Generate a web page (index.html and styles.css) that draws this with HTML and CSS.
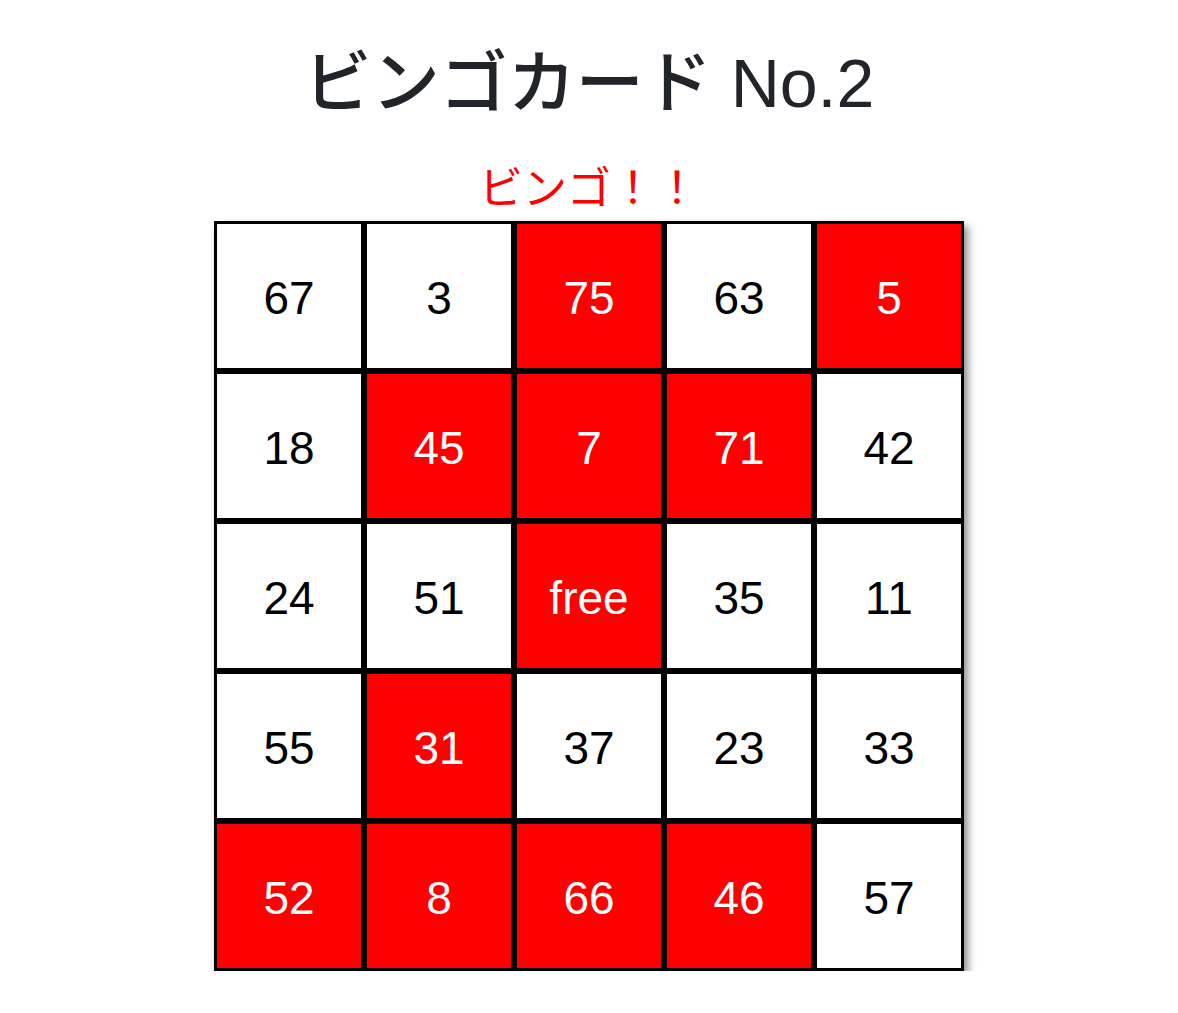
FILE: index.html
```html
<!DOCTYPE html>
<html lang="ja">
<head>
<meta charset="utf-8">
<title>ビンゴカード No.2</title>
<link rel="stylesheet" href="styles.css">
</head>
<body>
<main class="page">
  <h1 class="title">ビンゴカード No.2</h1>
  <p class="status">ビンゴ！！</p>
  <div class="card">
    <div class="cell">67</div>
    <div class="cell">3</div>
    <div class="cell hit">75</div>
    <div class="cell">63</div>
    <div class="cell hit">5</div>
    <div class="cell">18</div>
    <div class="cell hit">45</div>
    <div class="cell hit">7</div>
    <div class="cell hit">71</div>
    <div class="cell">42</div>
    <div class="cell">24</div>
    <div class="cell">51</div>
    <div class="cell hit">free</div>
    <div class="cell">35</div>
    <div class="cell">11</div>
    <div class="cell">55</div>
    <div class="cell hit">31</div>
    <div class="cell">37</div>
    <div class="cell">23</div>
    <div class="cell">33</div>
    <div class="cell hit">52</div>
    <div class="cell hit">8</div>
    <div class="cell hit">66</div>
    <div class="cell hit">46</div>
    <div class="cell">57</div>
  </div>
</main>
</body>
</html>
```

FILE: styles.css
```css
html, body {
  margin: 0;
  padding: 0;
  background: #ffffff;
}

body {
  font-family: "Liberation Sans", "Noto Sans CJK JP", sans-serif;
  color: #212529;
}

.page {
  display: flex;
  flex-direction: column;
  align-items: center;
}

.title {
  margin: 38px 0 0 0;
  font-size: 68px;
  font-weight: 500;
  line-height: 90px;
  color: #212529;
}

.status {
  margin: 36px 0 0 0;
  font-size: 44px;
  line-height: 50px;
  color: #ff0000;
}

.card {
  margin-top: 7px;
  display: grid;
  grid-template-columns: repeat(5, 150px);
  grid-auto-rows: 150px;
  box-shadow: 4px 5px 8px rgba(0, 0, 0, 0.45);
}

.cell {
  box-sizing: border-box;
  border: 3px solid #000000;
  padding-top: 4px;
  background: #ffffff;
  color: #000000;
  display: flex;
  align-items: center;
  justify-content: center;
  font-size: 46px;
}

.cell.hit {
  background: #ff0000;
  color: #ffffff;
}
```
